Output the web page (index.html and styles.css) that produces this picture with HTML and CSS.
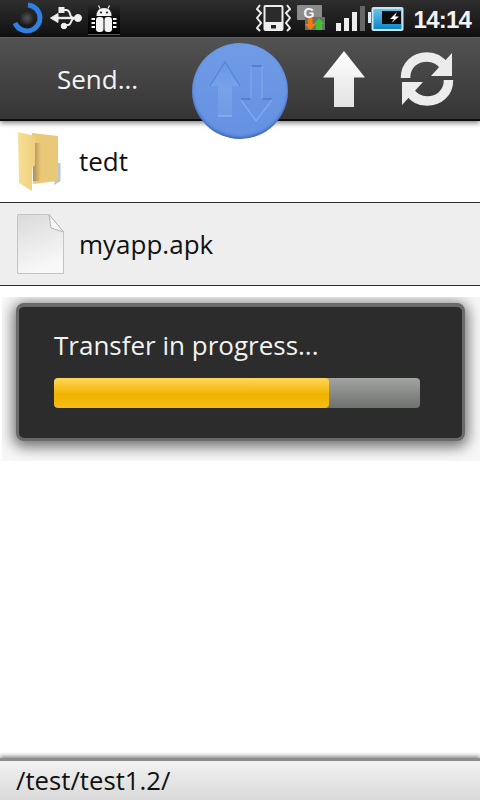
FILE: index.html
```html
<!DOCTYPE html>
<html lang="en">
<head>
<meta charset="utf-8">
<title>Send</title>
<link rel="stylesheet" href="styles.css">
</head>
<body>
<div class="screen">
  <header class="status">
    <div class="status-left">
      <svg class="ic-spin" width="32" height="32" viewBox="0 0 32 32"><defs><radialGradient id="blob"><stop offset="0" stop-color="#555"/><stop offset="1" stop-color="#222"/></radialGradient></defs><circle cx="15" cy="16" r="7" fill="url(#blob)"/><path d="M16 3A13 13 0 1 1 3 21" fill="none" stroke="#2f80e0" stroke-width="5"/></svg>
      <svg class="ic-usb" width="32" height="28" viewBox="0 0 32 28"><g fill="#eee" stroke="#eee"><path d="M0.500 14L8 9.500V18.500Z"/><path d="M6 14H27" stroke-width="2.400" fill="none"/><circle cx="28" cy="14" r="3.500"/><path d="M13 6H16Q19 6 20 10T24 14" stroke-width="2" fill="none"/><rect x="9" y="3.500" width="5" height="5"/><path d="M15 21H18Q20 21 21 18T24 14" stroke-width="2" fill="none"/><circle cx="14" cy="22" r="2.800"/></g></svg>
      <div class="bug">
        <svg width="26" height="28" viewBox="0 0 26 28"><g fill="#f4f4f4"><path d="M5.500 11Q5.500 3 13 3T20.500 11Z"/><rect x="5" y="12" width="7.500" height="15" rx="3"/><rect x="13.500" y="12" width="7.500" height="15" rx="3"/><rect x="0.500" y="13" width="3.500" height="2"/><rect x="0.500" y="17" width="3.500" height="2"/><rect x="0.500" y="21" width="3.500" height="2"/><rect x="22" y="13" width="3.500" height="2"/><rect x="22" y="17" width="3.500" height="2"/><rect x="22" y="21" width="3.500" height="2"/></g><path d="M9 3.500L7.500 0.500M17 3.500L18.500 0.500" stroke="#f4f4f4" stroke-width="1.200"/><circle cx="10" cy="7.500" r="1.100" fill="#222"/><circle cx="16" cy="7.500" r="1.100" fill="#222"/></svg>
      </div>
    </div>
    <div class="status-right">
      <svg class="ic-vib" width="35" height="28" viewBox="0 0 35 28"><path d="M4 1L1 5L5 9L1 14L5 19L1 24L4 27M31 1L34 5L30 9L34 14L30 19L34 24L31 27" fill="none" stroke="#eee" stroke-width="2"/><rect x="7.500" y="1" width="20" height="26" rx="2" fill="#eee"/><rect x="9.500" y="3" width="16" height="15" fill="#2b2b2b"/><rect x="15" y="21" width="5" height="3.500" fill="#222"/></svg>
      <svg class="ic-g" width="29" height="26" viewBox="0 0 29 26"><rect x="0" y="0" width="25" height="15" rx="1" fill="#8c8c8c"/><rect x="8" y="12" width="20" height="13" fill="#6e6e6e"/><text class="g-letter" x="12" y="13" text-anchor="middle">G</text><path d="M11 13H15.500V19H19L13.250 25L8 19H11Z" fill="#f47a12"/><path d="M19 25V19H16.500L22 13L27.500 19H25V25Z" fill="#3fc02c"/></svg>
      <div class="signal"><i class="b1"></i><i class="b2"></i><i class="b3"></i><i class="b4"></i></div>
      <svg class="ic-bat" width="36" height="25" viewBox="0 0 36 25"><defs><linearGradient id="bl" x1="0" y1="0" x2="0" y2="1"><stop offset="0" stop-color="#6ec3ea"/><stop offset="1" stop-color="#0b86c6"/></linearGradient></defs><rect x="0" y="6" width="3" height="11" fill="#dfeef6"/><rect x="3.500" y="1" width="32" height="24" rx="2" fill="#c4e6f5"/><rect x="5.500" y="3" width="28" height="20" fill="url(#bl)"/><rect x="14" y="5" width="19" height="13" fill="#0c0c0c"/><path d="M29 6L22 13H26L23.500 17L31 10.500H27Z" fill="#fff"/></svg>
      <span class="clock">14:14</span>
    </div>
  </header>

  <nav class="toolbar">
    <h1 class="title">Send...</h1>
    <div class="actions">
      <svg class="ic-up" width="44" height="58" viewBox="0 0 44 58"><defs><linearGradient id="w" x1="0" y1="0" x2="0" y2="1"><stop offset="0" stop-color="#fff"/><stop offset="1" stop-color="#e2e2e2"/></linearGradient></defs><path d="M22 1L43 27.500H32V57H12V27.500H1Z" fill="url(#w)"/></svg>
      <svg class="ic-sync" width="54" height="58" viewBox="0 0 54 58"><g fill="none" stroke="#ececec" stroke-width="9.500"><path d="M5.500 28C5.500 15 15 7 27 7C34 7 40 10 44 16"/><path d="M48.500 30C48.500 43 39 51 27 51C20 51 14 48 10 42"/></g><path d="M52 3V26H31Z" fill="#ececec"/><path d="M2 55V32H23Z" fill="#ececec"/></svg>
    </div>
  </nav>

  <div class="fab">
    <svg width="96" height="96" viewBox="0 0 96 96"><defs><linearGradient id="fa" x1="0" y1="0" x2="0" y2="1"><stop offset="0" stop-color="#6a97e4"/><stop offset="0.500" stop-color="#78a2ea"/><stop offset="1" stop-color="#6f9be6"/></linearGradient></defs><path d="M33 19L18 43H26V73H40V43H48Z" fill="url(#fa)"/><path d="M18 43L33 19L48 43" fill="none" stroke="#5585d6" stroke-width="1.200"/><path d="M26 73H40" stroke="#8fb2ee" stroke-width="1.500"/><path d="M59 23H70M49 56H59M70 56H80" stroke="#4f7bc8" stroke-width="1.500" fill="none"/><path d="M59 23V56M70 23V56" stroke="#7ea6ea" stroke-width="1.200" fill="none"/><path d="M49 57L64 78L80 57" stroke="#80a8ec" stroke-width="1.500" fill="none"/></svg>
  </div>

  <main class="content">
    <ul class="files">
      <li class="file first">
        <svg class="ic-folder" width="44" height="60" viewBox="0 0 44 60"><defs><linearGradient id="f" x1="0" y1="0" x2="1" y2="0"><stop offset="0" stop-color="#f7df95"/><stop offset="1" stop-color="#efcf7c"/></linearGradient><linearGradient id="sh" x1="0" y1="0" x2="1" y2="0"><stop offset="0" stop-color="#a89058"/><stop offset="1" stop-color="#e9c878"/></linearGradient></defs><path d="M40 32H42.500V50L36 54Z" fill="#b8c6d4"/><path d="M14 2L40 5V50L15 53Z" fill="#e9c878"/><path d="M15 12H23V50H15Z" fill="url(#sh)"/><path d="M0 1L17 5V34L14 37V60L1 52Z" fill="url(#f)"/></svg>
        <span class="name">tedt</span>
      </li>
      <li class="file alt">
        <svg class="ic-doc" width="47" height="60" viewBox="0 0 47 60"><defs><linearGradient id="d" x1="0" y1="0" x2="0.300" y2="1"><stop offset="0" stop-color="#dadada"/><stop offset="1" stop-color="#f8f8f8"/></linearGradient></defs><path d="M0.500 0.500H32L46.500 18V59.500H0.500Z" fill="url(#d)" stroke="#c4c4c4"/><path d="M32 0.500L34 14L46.500 18Z" fill="#f6f6f6" stroke="#b4b4b4"/></svg>
        <span class="name">myapp.apk</span>
      </li>
    </ul>
    <section class="dialog-wrap">
      <div class="dialog">
        <p class="msg">Transfer in progress...</p>
        <div class="bar"><div class="fill" style="width:75.100%"></div></div>
      </div>
    </section>
  </main>

  <footer class="path">/test/test1.2/</footer>
</div>
</body>
</html>
```
FILE: styles.css
```css
* { box-sizing: border-box; }
html, body { margin: 0; padding: 0; background: #fff; }
.screen {
  position: relative;
  width: 480px;
  height: 800px;
  display: flex;
  flex-direction: column;
  overflow: hidden;
  font-family: "Open Sans", "Noto Sans", sans-serif;
}
.status {
  height: 38px;
  flex: none;
  display: flex;
  justify-content: space-between;
  align-items: stretch;
  padding: 0 9px 2px 12px;
  background: linear-gradient(#2e2e2e, #101010);
  border-bottom: 1px solid #6c6c6c;
}
.status-left, .status-right { display: flex; align-items: center; }
.ic-usb { margin-left: 6px; }
.bug {
  width: 32px;
  height: 31px;
  margin-left: 6px;
  align-self: flex-end;
  display: flex;
  justify-content: center;
  padding-top: 1px;
  background: linear-gradient(#2a2a2a, #000 70%);
  border-bottom: 1px solid #555;
}
.bug svg { display: block; }
.ic-vib { margin-top: 1px; }
.ic-g { margin-left: 6px; margin-top: 1px; }
.g-letter {
  font-family: "Liberation Sans", sans-serif;
  font-weight: 700;
  font-size: 14px;
  fill: #f4f4f4;
}
.signal {
  display: flex;
  align-items: flex-end;
  gap: 3px;
  height: 25px;
  margin-left: 10px;
  margin-top: 2px;
}
.signal i { display: block; width: 5px; background: #eee; }
.signal .b1 { height: 8px; }
.signal .b2 { height: 13px; }
.signal .b3 { height: 19px; }
.signal .b4 { height: 25px; background: #666; }
.ic-bat { margin-left: 3px; margin-top: 2px; }
.clock {
  margin-left: 10px;
  margin-top: 4px;
  color: #f2f2f2;
  font-family: "Liberation Sans", Arial, sans-serif;
  font-weight: 700;
  font-size: 24px;
  letter-spacing: -0.800px;
  line-height: 28px;
}
.toolbar {
  height: 83px;
  flex: none;
  display: flex;
  justify-content: space-between;
  align-items: center;
  padding: 0 26px 0 57px;
  background: linear-gradient(#525252, #353535);
  border-bottom: 2px solid #0c0c0c;
  box-shadow: 0 2px 5px rgba(0, 0, 0, 0.5);
  position: relative;
  z-index: 1;
}
.title {
  margin: 0;
  color: #f4f4f4;
  font-size: 26px;
  font-weight: 400;
  line-height: 34px;
}
.actions { display: flex; align-items: center; gap: 34px; }
.fab {
  position: absolute;
  left: 192px;
  top: 43px;
  width: 96px;
  height: 96px;
  border-radius: 50%;
  background: linear-gradient(#6f9be6, #6491e2);
  box-shadow: inset 0 -2px 3px rgba(30, 60, 140, 0.5);
  z-index: 2;
}
.fab svg { display: block; }
.content { flex: 1; min-height: 0; display: flex; flex-direction: column; }
.files { list-style: none; margin: 0; padding: 0; }
.file {
  height: 82px;
  display: flex;
  align-items: center;
  gap: 16px;
  padding-left: 16px;
  background: #fff;
  border-bottom: 1px solid #2c2c2c;
  color: #111;
  font-size: 26px;
}
.file.first { padding-bottom: 2px; }
.file.alt { height: 83px; background: #eee; }
.ic-folder { margin-left: 2px; margin-right: 1px; }
.ic-doc { margin-left: 1px; margin-right: -1px; }
.name { line-height: 36px; }
.dialog-wrap {
  margin-top: 11px;
  height: 164px;
  padding: 6px 15px 0 14px;
  margin-left: 2px;
  background: #f7f7f7;
  overflow: hidden;
}
.dialog {
  height: 138px;
  padding: 23px 44px 0 35px;
  background: #2b2c2b;
  border-style: solid;
  border-color: #6a6a6a;
  border-width: 4px 3px 3px 3px;
  border-radius: 8px;
  box-shadow: 0 3px 14px 3px rgba(0, 0, 0, 0.55);
}
.msg {
  margin: 0 0 17px;
  color: #f2f2f2;
  font-size: 26px;
  line-height: 31px;
}
.bar {
  width: 366px;
  height: 30px;
  border-radius: 4px;
  overflow: hidden;
  background: linear-gradient(#a2a4a2, #6f716f);
}
.fill {
  height: 100%;
  border-radius: 4px;
  background: linear-gradient(#ffd65a, #f0b400 55%, #f4bd18);
}
.path {
  height: 42px;
  flex: none;
  padding: 2px 0 0 16px;
  color: #111;
  font-size: 25.700px;
  line-height: 36px;
  background: linear-gradient(#f2f2f2, #d9d9d9);
  box-shadow: 0 -2px 4px rgba(0, 0, 0, 0.45);
  border-top: 3px solid #8e8e8e;
}
```
